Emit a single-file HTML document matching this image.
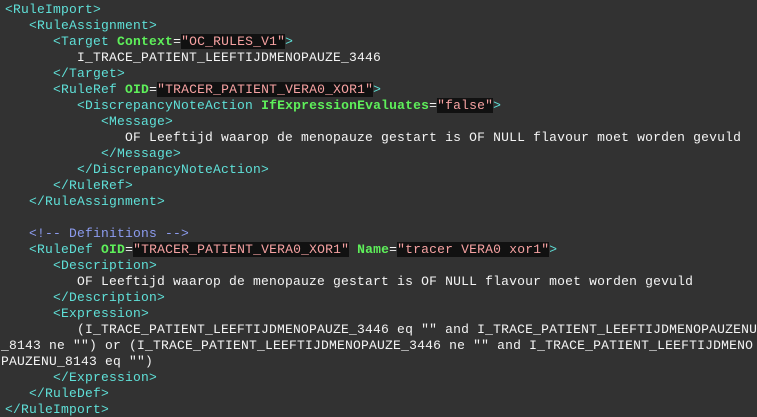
<!DOCTYPE html>
<html><head><meta charset="utf-8"><style>
html,body{margin:0;padding:0;background:#323232;width:757px;height:417px;overflow:hidden}
pre{margin:0;padding:2px 0 0 5px;font-family:"Liberation Mono","DejaVu Sans Mono",monospace;font-size:13px;letter-spacing:0.2px;line-height:16px;color:#f4f4f4;white-space:pre}
.t{color:#5fe0d8}
.a{color:#5ef05a;font-weight:bold}
.s{color:#f7a2a2;background:#111}
.c{color:#8c9cf0}
.w{margin-left:-4px}
</style></head><body><pre><span class="t">&lt;RuleImport&gt;</span>
   <span class="t">&lt;RuleAssignment&gt;</span>
      <span class="t">&lt;Target</span> <span class="a">Context</span>=<span class="s">"OC_RULES_V1"</span><span class="t">&gt;</span>
         I_TRACE_PATIENT_LEEFTIJDMENOPAUZE_3446
      <span class="t">&lt;/Target&gt;</span>
      <span class="t">&lt;RuleRef</span> <span class="a">OID</span>=<span class="s">"TRACER_PATIENT_VERA0_XOR1"</span><span class="t">&gt;</span>
         <span class="t">&lt;DiscrepancyNoteAction</span> <span class="a">IfExpressionEvaluates</span>=<span class="s">"false"</span><span class="t">&gt;</span>
            <span class="t">&lt;Message&gt;</span>
               OF Leeftijd waarop de menopauze gestart is OF NULL flavour moet worden gevuld
            <span class="t">&lt;/Message&gt;</span>
         <span class="t">&lt;/DiscrepancyNoteAction&gt;</span>
      <span class="t">&lt;/RuleRef&gt;</span>
   <span class="t">&lt;/RuleAssignment&gt;</span>

   <span class="c">&lt;!-- Definitions --&gt;</span>
   <span class="t">&lt;RuleDef</span> <span class="a">OID</span>=<span class="s">"TRACER_PATIENT_VERA0_XOR1"</span> <span class="a">Name</span>=<span class="s">"tracer VERA0 xor1"</span><span class="t">&gt;</span>
      <span class="t">&lt;Description&gt;</span>
         OF Leeftijd waarop de menopauze gestart is OF NULL flavour moet worden gevuld
      <span class="t">&lt;/Description&gt;</span>
      <span class="t">&lt;Expression&gt;</span>
         (I_TRACE_PATIENT_LEEFTIJDMENOPAUZE_3446 eq "" and I_TRACE_PATIENT_LEEFTIJDMENOPAUZENU
<span class="w">_8143 ne "") or (I_TRACE_PATIENT_LEEFTIJDMENOPAUZE_3446 ne "" and I_TRACE_PATIENT_LEEFTIJDMENO</span>
<span class="w">PAUZENU_8143 eq "")</span>
      <span class="t">&lt;/Expression&gt;</span>
   <span class="t">&lt;/RuleDef&gt;</span>
<span class="t">&lt;/RuleImport&gt;</span></pre></body></html>
